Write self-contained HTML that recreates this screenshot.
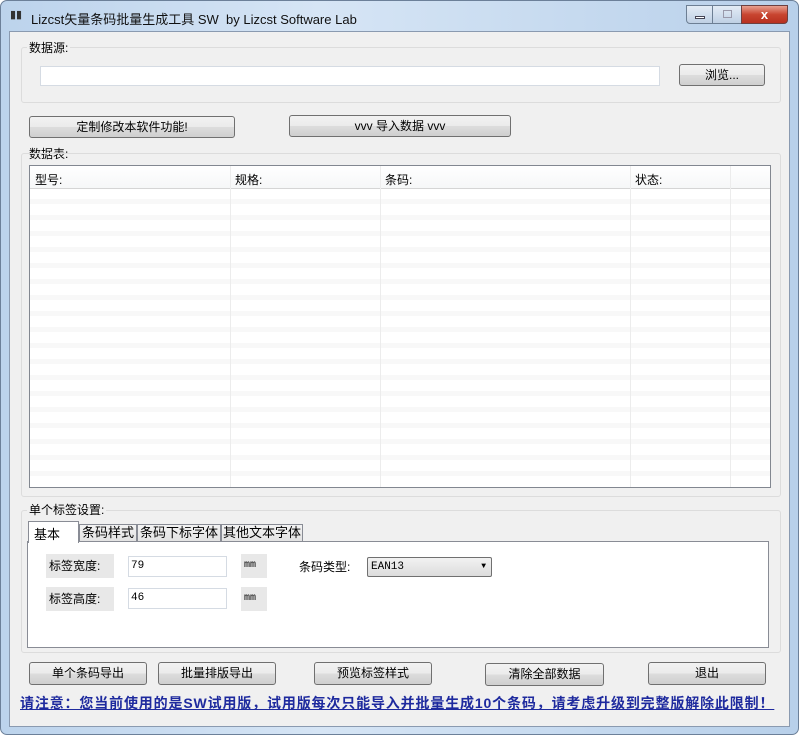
<!DOCTYPE html><html><head><meta charset="utf-8"><style>
*{box-sizing:border-box;margin:0;padding:0}
body{width:799px;height:735px;background:#fff;font-family:"Liberation Sans","Noto Sans CJK SC",sans-serif;font-size:12px;color:#000;position:relative;overflow:hidden}
.a{position:absolute}
.btn{position:absolute;border:1px solid #707070;border-radius:3px;background:linear-gradient(#f2f2f2,#ebebeb 50%,#dddddd 51%,#cfcfcf);text-align:center;font-size:12px;line-height:20px}
.grp{position:absolute;border:1px solid #dcdcdc;border-radius:3px}
.lbl{position:absolute;font-size:12px;background:#f0f0f0;padding:0 2px}
.inp{position:absolute;background:#fff;border:1px solid #d5dbe3;font-size:11px;font-family:"Liberation Mono",monospace;padding-left:2px;line-height:18px}
.g{position:absolute;background:#e8e8e8;font-size:12px;line-height:24px;padding-left:3px}
</style></head><body>
<div class="a" style="left:0;top:0;width:799px;height:735px;border-radius:7px;background:linear-gradient(90deg,#bcd3ec,#d6e5f5 40%,#b8d0ea);border:1px solid #6c8099"></div>
<div class="a" style="left:10px;top:8px;font-size:11px;color:#333">▮▮</div>
<div class="a" style="left:31px;top:9px;font-size:13px;color:#111">Lizcst矢量条码批量生成工具 SW&nbsp; by Lizcst Software Lab</div>
<div class="a" style="left:686px;top:5px;width:27px;height:19px;border:1px solid #6d7f94;border-radius:0 0 0 4px;background:linear-gradient(#e3ecf6,#bfd0e4)"><div class="a" style="left:8px;top:10px;width:10px;height:3px;background:#fff;border:1px solid #445"></div></div>
<div class="a" style="left:712px;top:5px;width:30px;height:19px;border:1px solid #6d7f94;background:linear-gradient(#e3ecf6,#bfd0e4)"><div class="a" style="left:10px;top:4px;width:9px;height:8px;border:1px solid #99a"></div></div>
<div class="a" style="left:741px;top:5px;width:47px;height:19px;border:1px solid #6d4040;border-radius:0 0 4px 0;background:linear-gradient(#e8a090,#c84530 50%,#b83020);color:#fff;font-weight:bold;text-align:center;line-height:17px;font-size:13px">x</div>
<div class="a" style="left:9px;top:31px;width:781px;height:696px;background:#f0f0f0;border:1px solid #8a9ab0"></div>

<div class="grp" style="left:21px;top:47px;width:760px;height:56px"></div>
<div class="lbl" style="left:27px;top:39px">数据源:</div>
<div class="inp" style="left:40px;top:66px;width:620px;height:20px"></div>
<div class="btn" style="left:679px;top:64px;width:86px;height:22px">浏览...</div>

<div class="btn" style="left:29px;top:116px;width:206px;height:22px">定制修改本软件功能!</div>
<div class="btn" style="left:289px;top:115px;width:222px;height:22px">vvv 导入数据 vvv</div>
<div class="lbl" style="left:27px;top:145px">数据表:</div>
<div class="grp" style="left:21px;top:153px;width:760px;height:344px"></div>

<div class="a" style="left:29px;top:165px;width:742px;height:323px;border:1px solid #828790;background:repeating-linear-gradient(#fff 0 11px,#f8f8f8 11px 16px);background-position:0 22px;overflow:hidden">
<div class="a" style="left:0;top:0;width:742px;height:23px;background:linear-gradient(#fff,#f6f7f8);border-bottom:1px solid #d5d5d5"></div>
<div class="a" style="left:5px;top:5px">型号:</div>
<div class="a" style="left:205px;top:5px">规格:</div>
<div class="a" style="left:355px;top:5px">条码:</div>
<div class="a" style="left:605px;top:5px">状态:</div>
<div class="a" style="left:200px;top:0;width:1px;height:323px;background:#ececec"></div>
<div class="a" style="left:350px;top:0;width:1px;height:323px;background:#ececec"></div>
<div class="a" style="left:600px;top:0;width:1px;height:323px;background:#ececec"></div>
<div class="a" style="left:700px;top:0;width:1px;height:323px;background:#ececec"></div>
</div>

<div class="grp" style="left:21px;top:510px;width:760px;height:143px"></div>
<div class="lbl" style="left:27px;top:501px">单个标签设置:</div>
<div class="a" style="left:27px;top:541px;width:742px;height:107px;background:#fff;border:1px solid #898c95"></div>
<div class="a" style="left:28px;top:521px;width:51px;height:22px;background:#fff;border:1px solid #898c95;border-bottom:none;padding:2px 5px;font-size:13px">基本</div>
<div class="a" style="left:79px;top:524px;width:58px;height:18px;background:linear-gradient(#f3f3f3,#e3e3e3);border:1px solid #898c95;text-align:center;line-height:16px;font-size:13px">条码样式</div>
<div class="a" style="left:137px;top:524px;width:84px;height:18px;background:linear-gradient(#f3f3f3,#e3e3e3);border:1px solid #898c95;text-align:center;line-height:16px;font-size:13px">条码下标字体</div>
<div class="a" style="left:221px;top:524px;width:82px;height:18px;background:linear-gradient(#f3f3f3,#e3e3e3);border:1px solid #898c95;text-align:center;line-height:16px;font-size:13px">其他文本字体</div>

<div class="g" style="left:46px;top:554px;width:68px;height:24px">标签宽度:</div>
<div class="inp" style="left:128px;top:556px;width:99px;height:21px">79</div>
<div class="g" style="left:241px;top:554px;width:26px;height:24px;font-size:10px;font-family:'Liberation Mono',monospace">mm</div>
<div class="a" style="left:299px;top:558px;font-size:12px">条码类型:</div>
<div class="a" style="left:367px;top:557px;width:125px;height:20px;border:1px solid #707070;border-radius:2px;background:linear-gradient(#f2f2f2,#dcdcdc);font-size:11px;font-family:'Liberation Mono',monospace;line-height:18px;padding-left:3px">EAN13<span style="position:absolute;right:5px;top:0;font-size:8px">▼</span></div>
<div class="g" style="left:46px;top:587px;width:68px;height:24px">标签高度:</div>
<div class="inp" style="left:128px;top:588px;width:99px;height:21px">46</div>
<div class="g" style="left:241px;top:587px;width:26px;height:24px;font-size:10px;font-family:'Liberation Mono',monospace">mm</div>

<div class="btn" style="left:29px;top:662px;width:118px;height:23px">单个条码导出</div>
<div class="btn" style="left:158px;top:662px;width:118px;height:23px">批量排版导出</div>
<div class="btn" style="left:314px;top:662px;width:118px;height:23px">预览标签样式</div>
<div class="btn" style="left:485px;top:663px;width:119px;height:23px">清除全部数据</div>
<div class="btn" style="left:648px;top:662px;width:118px;height:23px">退出</div>
<div class="a" style="left:20px;top:693px;font-size:14px;font-weight:bold;color:#1e2a9e;text-decoration:underline;white-space:nowrap;letter-spacing:0.85px">请注意：您当前使用的是SW试用版，试用版每次只能导入并批量生成10个条码，请考虑升级到完整版解除此限制！</div>
</body></html>
